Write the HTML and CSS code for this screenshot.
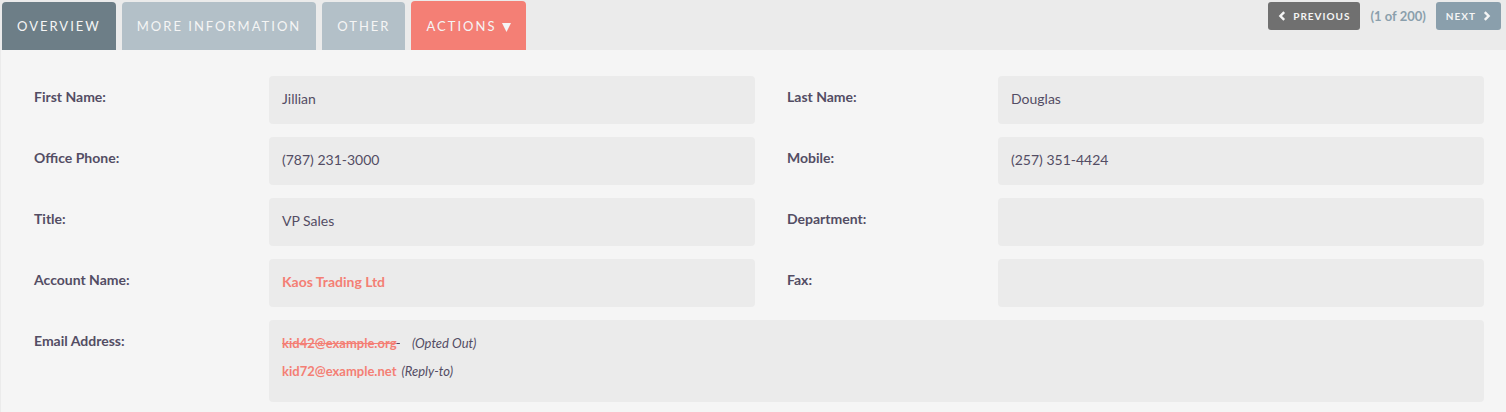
FILE: index.html
```html
<!DOCTYPE html>
<html lang="en">
<head>
<meta charset="utf-8">
<meta name="viewport" content="width=device-width, initial-scale=1">
<title>Jillian Douglas</title>
<link rel="stylesheet" href="styles.css">
</head>
<body>
<header class="bar">
  <nav class="tabs">
    <a class="tab tab-active" href="#overview">OVERVIEW</a>
    <a class="tab" href="#more">MORE INFORMATION</a>
    <a class="tab" href="#other">OTHER</a>
    <button class="tab tab-actions" type="button">ACTIONS <svg class="caret" viewBox="0 0 9 9" aria-hidden="true"><path d="M0 0h9L4.500 9z"/></svg></button>
  </nav>
  <div class="pager">
    <button class="page-btn page-prev" type="button"><svg class="chevron" viewBox="0 0 8 10" aria-hidden="true"><path d="M6.200 1.200L2.400 5l3.800 3.800"/></svg>PREVIOUS</button>
    <span class="count">(1 of 200)</span>
    <button class="page-btn page-next" type="button">NEXT<svg class="chevron" viewBox="0 0 8 10" aria-hidden="true"><path d="M1.800 1.200L5.600 5 1.800 8.800"/></svg></button>
  </div>
</header>
<main class="panel" id="overview">
  <dl class="details">
    <dt class="label">First Name:</dt><dd class="field">Jillian</dd>
    <dt class="label label-second">Last Name:</dt><dd class="field">Douglas</dd>
    <dt class="label">Office Phone:</dt><dd class="field">(787) 231-3000</dd>
    <dt class="label label-second">Mobile:</dt><dd class="field">(257) 351-4424</dd>
    <dt class="label">Title:</dt><dd class="field">VP Sales</dd>
    <dt class="label label-second">Department:</dt><dd class="field"></dd>
    <dt class="label">Account Name:</dt><dd class="field"><a class="link" href="#account">Kaos Trading Ltd</a></dd>
    <dt class="label label-second">Fax:</dt><dd class="field"></dd>
    <dt class="label">Email Address:</dt>
    <dd class="field field-wide">
      <div class="email"><a class="link opted-out" href="mailto:kid42@example.org">kid42@example.org</a><span class="opted-out">&nbsp;</span><i class="note note-far">(Opted Out)</i></div>
      <div class="email"><a class="link" href="mailto:kid72@example.net">kid72@example.net</a><i class="note">(Reply-to)</i></div>
    </dd>
  </dl>
</main>
</body>
</html>
```
FILE: styles.css
```css
* { box-sizing: border-box; }

body {
  margin: 0;
  background: #ebebeb;
  color: #534d64;
  font: 14px/20px Lato, "Liberation Sans", sans-serif;
}

.bar {
  display: flex;
  justify-content: space-between;
  align-items: flex-start;
  height: 50px;
  padding-right: 5px;
}

.tabs {
  display: flex;
  align-items: flex-end;
  gap: 6px;
  height: 50px;
  padding-left: 2px;
}

.tab {
  height: 48px;
  padding: 0 15px;
  border: 0;
  border-radius: 4px 4px 0 0;
  background: #b3c0c8;
  color: #f5f5f5;
  font: 13px/48px Lato, "Liberation Sans", sans-serif;
  letter-spacing: 2px;
  text-decoration: none;
  white-space: nowrap;
}

.tab-active { background: #6d7e87; }

.tab-actions {
  height: 49px;
  background: #f47f75;
  cursor: pointer;
}

.caret {
  width: 9px;
  height: 9px;
  fill: #f5f5f5;
  vertical-align: -1px;
}

.pager {
  display: flex;
  align-items: center;
  gap: 10px;
  padding-top: 2px;
}

.page-btn {
  display: flex;
  align-items: center;
  gap: 7px;
  height: 28px;
  padding: 0 10px;
  border: 0;
  border-radius: 3px;
  color: #f5f5f5;
  font: bold 10px/28px Lato, "Liberation Sans", sans-serif;
  letter-spacing: 1px;
  cursor: pointer;
}

.page-prev { background: #707070; }
.page-next { background: #8a9fac; }

.chevron {
  width: 8px;
  height: 10px;
  fill: none;
  stroke: #f5f5f5;
  stroke-width: 2.4;
}

.count {
  color: #8a9fac;
  font-size: 13px;
  font-weight: bold;
  white-space: nowrap;
}

.panel {
  min-height: calc(100vh - 50px);
  margin-left: 1px;
  padding: 26px 22px 10px 33px;
  background: #f5f5f5;
}

.details {
  display: grid;
  grid-template-columns: 235px 1fr 243px 1fr;
  row-gap: 13px;
  margin: 0;
}

.label {
  padding-top: 11px;
  font-weight: bold;
}

.label-second { padding-left: 32px; }

.field {
  min-height: 48px;
  margin: 0;
  padding: 13px;
  border-radius: 4px;
  background: #ebebeb;
}

.field-wide {
  grid-column: 2 / -1;
  padding: 9px 13px 17px;
}

.link {
  color: #f47f75;
  font-weight: bold;
  text-decoration: none;
}

.email {
  font-size: 13px;
  line-height: 28px;
}

.opted-out { text-decoration: line-through; }
.note { margin-left: 5px; }
.note-far { margin-left: 12px; }
```
